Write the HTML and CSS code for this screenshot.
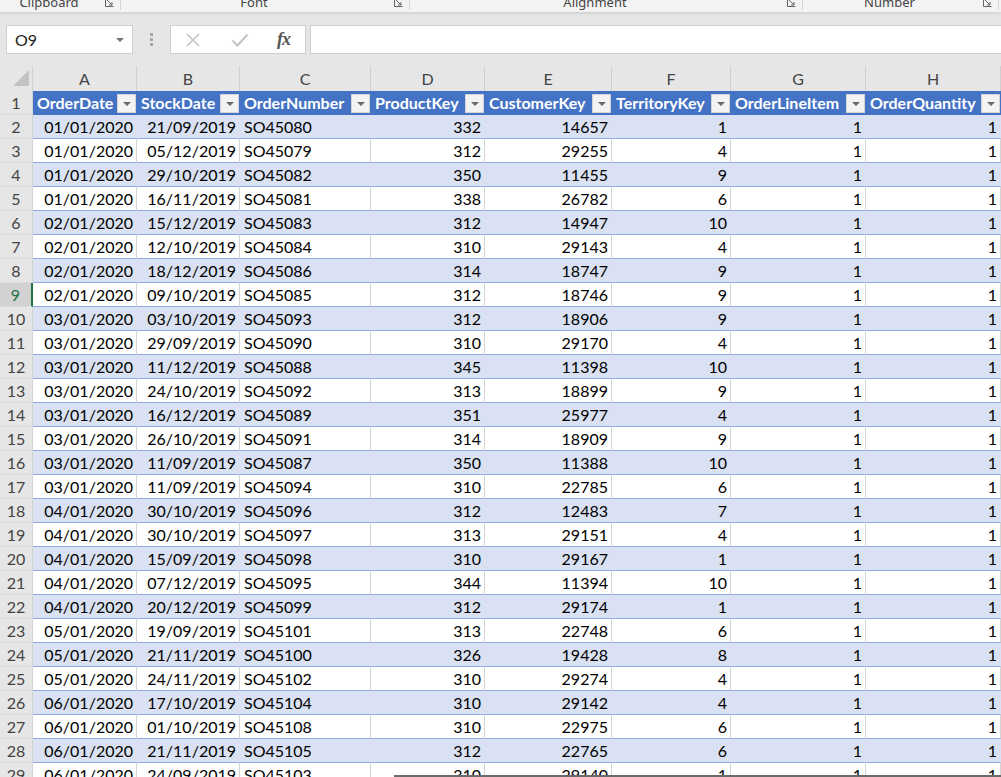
FILE: index.html
```html
<!DOCTYPE html>
<html>
<head>
<meta charset="utf-8">
<link rel="stylesheet" href="styles.css">
</head>
<body>
<div class="ribbon">
  <div class="grp g1"><span class="glabel">Clipboard</span><span class="launch"><svg width="9" height="8" viewBox="0 0 9 8"><path d="M0.5 0.5V7.5H8.5" fill="none" stroke="#666" stroke-width="1"/><path d="M2 1L7 6M7 3V6H4" fill="none" stroke="#666" stroke-width="1"/></svg></span></div>
  <div class="grp g2"><span class="glabel">Font</span><span class="launch"><svg width="9" height="8" viewBox="0 0 9 8"><path d="M0.5 0.5V7.5H8.5" fill="none" stroke="#666" stroke-width="1"/><path d="M2 1L7 6M7 3V6H4" fill="none" stroke="#666" stroke-width="1"/></svg></span></div>
  <div class="grp g3"><span class="glabel">Alignment</span><span class="launch"><svg width="9" height="8" viewBox="0 0 9 8"><path d="M0.5 0.5V7.5H8.5" fill="none" stroke="#666" stroke-width="1"/><path d="M2 1L7 6M7 3V6H4" fill="none" stroke="#666" stroke-width="1"/></svg></span></div>
  <div class="grp g4"><span class="glabel">Number</span><span class="launch"><svg width="9" height="8" viewBox="0 0 9 8"><path d="M0.5 0.5V7.5H8.5" fill="none" stroke="#666" stroke-width="1"/><path d="M2 1L7 6M7 3V6H4" fill="none" stroke="#666" stroke-width="1"/></svg></span></div>
</div>

<div class="fbar">
  <div class="namebox"><span>O9</span><svg class="nbarrow" width="8" height="4" viewBox="0 0 8 4"><path d="M0 0H8L4 4Z" fill="#777"/></svg></div>
  <div class="dots"><i></i><i></i><i></i></div>
  <div class="fxbox">
    <svg class="ic" width="16" height="16" viewBox="0 0 16 16"><path d="M2 2L14 14M14 2L2 14" stroke="#c4c4c4" stroke-width="1.6" fill="none"/></svg>
    <svg class="ic" width="18" height="16" viewBox="0 0 18 16"><path d="M1.5 8.5L6.5 13.5L16.5 2.5" stroke="#c4c4c4" stroke-width="2" fill="none"/></svg>
    <span class="fx">fx</span>
  </div>
  <div class="finput"></div>
</div>

<div class="sheet">
  <div class="row colhead">
    <div class="rh corner"><svg width="16" height="16" viewBox="0 0 16 16"><path d="M16 0V16H0Z" fill="#c3c3c3"/></svg></div>
    <div class="ch ca">A</div><div class="ch cb">B</div><div class="ch cc">C</div><div class="ch cd">D</div><div class="ch ce">E</div><div class="ch cf">F</div><div class="ch cg">G</div><div class="ch chh">H</div>
  </div>
  <div class="row thead">
    <div class="rh">1</div>
    <div class="th ca"><span>OrderDate</span><b class="flt"></b></div>
    <div class="th cb"><span>StockDate</span><b class="flt"></b></div>
    <div class="th cc"><span>OrderNumber</span><b class="flt"></b></div>
    <div class="th cd"><span>ProductKey</span><b class="flt"></b></div>
    <div class="th ce"><span>CustomerKey</span><b class="flt"></b></div>
    <div class="th cf"><span>TerritoryKey</span><b class="flt"></b></div>
    <div class="th cg"><span>OrderLineItem</span><b class="flt"></b></div>
    <div class="th chh"><span>OrderQuantity</span><b class="flt"></b></div>
  </div>
  <div class="row band"><div class="rh">2</div><div class="td ca n">01/01/2020</div><div class="td cb n">21/09/2019</div><div class="td cc">SO45080</div><div class="td cd n">332</div><div class="td ce n">14657</div><div class="td cf n">1</div><div class="td cg n">1</div><div class="td chh n">1</div></div>
  <div class="row"><div class="rh">3</div><div class="td ca n">01/01/2020</div><div class="td cb n">05/12/2019</div><div class="td cc">SO45079</div><div class="td cd n">312</div><div class="td ce n">29255</div><div class="td cf n">4</div><div class="td cg n">1</div><div class="td chh n">1</div></div>
  <div class="row band"><div class="rh">4</div><div class="td ca n">01/01/2020</div><div class="td cb n">29/10/2019</div><div class="td cc">SO45082</div><div class="td cd n">350</div><div class="td ce n">11455</div><div class="td cf n">9</div><div class="td cg n">1</div><div class="td chh n">1</div></div>
  <div class="row"><div class="rh">5</div><div class="td ca n">01/01/2020</div><div class="td cb n">16/11/2019</div><div class="td cc">SO45081</div><div class="td cd n">338</div><div class="td ce n">26782</div><div class="td cf n">6</div><div class="td cg n">1</div><div class="td chh n">1</div></div>
  <div class="row band"><div class="rh">6</div><div class="td ca n">02/01/2020</div><div class="td cb n">15/12/2019</div><div class="td cc">SO45083</div><div class="td cd n">312</div><div class="td ce n">14947</div><div class="td cf n">10</div><div class="td cg n">1</div><div class="td chh n">1</div></div>
  <div class="row"><div class="rh">7</div><div class="td ca n">02/01/2020</div><div class="td cb n">12/10/2019</div><div class="td cc">SO45084</div><div class="td cd n">310</div><div class="td ce n">29143</div><div class="td cf n">4</div><div class="td cg n">1</div><div class="td chh n">1</div></div>
  <div class="row band"><div class="rh">8</div><div class="td ca n">02/01/2020</div><div class="td cb n">18/12/2019</div><div class="td cc">SO45086</div><div class="td cd n">314</div><div class="td ce n">18747</div><div class="td cf n">9</div><div class="td cg n">1</div><div class="td chh n">1</div></div>
  <div class="row"><div class="rh sel">9</div><div class="td ca n">02/01/2020</div><div class="td cb n">09/10/2019</div><div class="td cc">SO45085</div><div class="td cd n">312</div><div class="td ce n">18746</div><div class="td cf n">9</div><div class="td cg n">1</div><div class="td chh n">1</div></div>
  <div class="row band"><div class="rh">10</div><div class="td ca n">03/01/2020</div><div class="td cb n">03/10/2019</div><div class="td cc">SO45093</div><div class="td cd n">312</div><div class="td ce n">18906</div><div class="td cf n">9</div><div class="td cg n">1</div><div class="td chh n">1</div></div>
  <div class="row"><div class="rh">11</div><div class="td ca n">03/01/2020</div><div class="td cb n">29/09/2019</div><div class="td cc">SO45090</div><div class="td cd n">310</div><div class="td ce n">29170</div><div class="td cf n">4</div><div class="td cg n">1</div><div class="td chh n">1</div></div>
  <div class="row band"><div class="rh">12</div><div class="td ca n">03/01/2020</div><div class="td cb n">11/12/2019</div><div class="td cc">SO45088</div><div class="td cd n">345</div><div class="td ce n">11398</div><div class="td cf n">10</div><div class="td cg n">1</div><div class="td chh n">1</div></div>
  <div class="row"><div class="rh">13</div><div class="td ca n">03/01/2020</div><div class="td cb n">24/10/2019</div><div class="td cc">SO45092</div><div class="td cd n">313</div><div class="td ce n">18899</div><div class="td cf n">9</div><div class="td cg n">1</div><div class="td chh n">1</div></div>
  <div class="row band"><div class="rh">14</div><div class="td ca n">03/01/2020</div><div class="td cb n">16/12/2019</div><div class="td cc">SO45089</div><div class="td cd n">351</div><div class="td ce n">25977</div><div class="td cf n">4</div><div class="td cg n">1</div><div class="td chh n">1</div></div>
  <div class="row"><div class="rh">15</div><div class="td ca n">03/01/2020</div><div class="td cb n">26/10/2019</div><div class="td cc">SO45091</div><div class="td cd n">314</div><div class="td ce n">18909</div><div class="td cf n">9</div><div class="td cg n">1</div><div class="td chh n">1</div></div>
  <div class="row band"><div class="rh">16</div><div class="td ca n">03/01/2020</div><div class="td cb n">11/09/2019</div><div class="td cc">SO45087</div><div class="td cd n">350</div><div class="td ce n">11388</div><div class="td cf n">10</div><div class="td cg n">1</div><div class="td chh n">1</div></div>
  <div class="row"><div class="rh">17</div><div class="td ca n">03/01/2020</div><div class="td cb n">11/09/2019</div><div class="td cc">SO45094</div><div class="td cd n">310</div><div class="td ce n">22785</div><div class="td cf n">6</div><div class="td cg n">1</div><div class="td chh n">1</div></div>
  <div class="row band"><div class="rh">18</div><div class="td ca n">04/01/2020</div><div class="td cb n">30/10/2019</div><div class="td cc">SO45096</div><div class="td cd n">312</div><div class="td ce n">12483</div><div class="td cf n">7</div><div class="td cg n">1</div><div class="td chh n">1</div></div>
  <div class="row"><div class="rh">19</div><div class="td ca n">04/01/2020</div><div class="td cb n">30/10/2019</div><div class="td cc">SO45097</div><div class="td cd n">313</div><div class="td ce n">29151</div><div class="td cf n">4</div><div class="td cg n">1</div><div class="td chh n">1</div></div>
  <div class="row band"><div class="rh">20</div><div class="td ca n">04/01/2020</div><div class="td cb n">15/09/2019</div><div class="td cc">SO45098</div><div class="td cd n">310</div><div class="td ce n">29167</div><div class="td cf n">1</div><div class="td cg n">1</div><div class="td chh n">1</div></div>
  <div class="row"><div class="rh">21</div><div class="td ca n">04/01/2020</div><div class="td cb n">07/12/2019</div><div class="td cc">SO45095</div><div class="td cd n">344</div><div class="td ce n">11394</div><div class="td cf n">10</div><div class="td cg n">1</div><div class="td chh n">1</div></div>
  <div class="row band"><div class="rh">22</div><div class="td ca n">04/01/2020</div><div class="td cb n">20/12/2019</div><div class="td cc">SO45099</div><div class="td cd n">312</div><div class="td ce n">29174</div><div class="td cf n">1</div><div class="td cg n">1</div><div class="td chh n">1</div></div>
  <div class="row"><div class="rh">23</div><div class="td ca n">05/01/2020</div><div class="td cb n">19/09/2019</div><div class="td cc">SO45101</div><div class="td cd n">313</div><div class="td ce n">22748</div><div class="td cf n">6</div><div class="td cg n">1</div><div class="td chh n">1</div></div>
  <div class="row band"><div class="rh">24</div><div class="td ca n">05/01/2020</div><div class="td cb n">21/11/2019</div><div class="td cc">SO45100</div><div class="td cd n">326</div><div class="td ce n">19428</div><div class="td cf n">8</div><div class="td cg n">1</div><div class="td chh n">1</div></div>
  <div class="row"><div class="rh">25</div><div class="td ca n">05/01/2020</div><div class="td cb n">24/11/2019</div><div class="td cc">SO45102</div><div class="td cd n">310</div><div class="td ce n">29274</div><div class="td cf n">4</div><div class="td cg n">1</div><div class="td chh n">1</div></div>
  <div class="row band"><div class="rh">26</div><div class="td ca n">06/01/2020</div><div class="td cb n">17/10/2019</div><div class="td cc">SO45104</div><div class="td cd n">310</div><div class="td ce n">29142</div><div class="td cf n">4</div><div class="td cg n">1</div><div class="td chh n">1</div></div>
  <div class="row"><div class="rh">27</div><div class="td ca n">06/01/2020</div><div class="td cb n">01/10/2019</div><div class="td cc">SO45108</div><div class="td cd n">310</div><div class="td ce n">22975</div><div class="td cf n">6</div><div class="td cg n">1</div><div class="td chh n">1</div></div>
  <div class="row band"><div class="rh">28</div><div class="td ca n">06/01/2020</div><div class="td cb n">21/11/2019</div><div class="td cc">SO45105</div><div class="td cd n">312</div><div class="td ce n">22765</div><div class="td cf n">6</div><div class="td cg n">1</div><div class="td chh n">1</div></div>
  <div class="row"><div class="rh">29</div><div class="td ca n">06/01/2020</div><div class="td cb n">24/09/2019</div><div class="td cc">SO45103</div><div class="td cd n">310</div><div class="td ce n">29140</div><div class="td cf n">1</div><div class="td cg n">1</div><div class="td chh n">1</div></div>
  <div class="hscroll"></div>
</div>
</body>
</html>
```

FILE: styles.css
```css
html, body {
  margin: 0;
  padding: 0;
}
body {
  width: 1001px;
  height: 777px;
  overflow: hidden;
  background: #e6e6e6;
  font-family: Lato, "Liberation Sans", sans-serif;
  color: #000;
}

/* ribbon strip */
.ribbon {
  position: relative;
  z-index: 2;
  height: 12px;
  background: #f3f3f3;
  display: flex;
  overflow: hidden;
  box-shadow: 0 1px 3px rgba(0,0,0,0.13);
}
.grp {
  display: flex;
  align-items: flex-start;
  border-right: 1px solid #d6d6d6;
  height: 10px;
}
.g1 { width: 120px; }
.g2 { width: 288px; }
.g3 { width: 392px; }
.g4 { width: 195px; }
.glabel {
  flex: 1;
  text-align: center;
  font-family: "Segoe UI", "Noto Sans", sans-serif;
  font-size: 13px;
  line-height: 13px;
  margin-top: -4px;
  color: #444;
}
.launch {
  width: 22px;
  display: flex;
  justify-content: center;
}
.launch svg { display: block; margin-top: -1px; }

/* formula bar */
.fbar {
  display: flex;
  align-items: center;
  height: 29px;
  padding: 13px 0 12px 6px;
}
.namebox {
  width: 127px;
  height: 29px;
  box-sizing: border-box;
  background: #fff;
  border: 1px solid #cfcfcf;
  display: flex;
  align-items: center;
  padding-left: 8px;
  padding-right: 8px;
  font-size: 16px;
  color: #222;
}
.namebox span { flex: 1; }
.nbarrow { display: block; }
.dots {
  width: 37px;
  display: flex;
  flex-direction: column;
  align-items: center;
  gap: 2px;
}
.dots i {
  display: block;
  width: 3px;
  height: 3px;
  background: #a8a8a8;
}
.fxbox {
  width: 136px;
  height: 29px;
  box-sizing: border-box;
  background: #fff;
  border: 1px solid #cfcfcf;
  display: flex;
  align-items: center;
  padding-left: 14px;
}
.fxbox .ic { display: block; }
.fxbox .ic:nth-child(1) { margin-right: 30px; }
.fxbox .ic:nth-child(2) { margin-right: 28px; }
.fx {
  font-family: "Liberation Serif", "DejaVu Serif", serif;
  font-style: italic;
  font-weight: bold;
  font-size: 18px;
  color: #555;
  letter-spacing: -1px;
}
.finput {
  flex: 1;
  height: 29px;
  box-sizing: border-box;
  margin-left: 4px;
  background: #fff;
  border: 1px solid #cfcfcf;
  border-right: none;
}

/* sheet */
.sheet {
  position: relative;
}
.row {
  display: flex;
  height: 24px;
}
.rh {
  width: 33px;
  flex: none;
  box-sizing: border-box;
  background: #e6e6e6;
  color: #444;
  font-size: 16px;
  text-align: center;
  line-height: 23px;
  border-bottom: 1px solid #dcdcdc;
  border-right: 1px solid #d2d2d2;
}
.rh.sel {
  background: #d2d2d2;
  color: #217346;
  border-right: 2px solid #217346;
}
.ca { width: 104px; }
.cb { width: 103px; }
.cc { width: 131px; }
.cd { width: 114px; }
.ce { width: 127px; }
.cf { width: 119px; }
.cg { width: 135px; }
.chh { width: 135px; }

.colhead { height: 25px; }
.colhead .rh {
  border-bottom: none;
  display: flex;
  align-items: flex-end;
  justify-content: flex-end;
  padding: 0 3px 5px 0;
}
.corner svg { display: block; }
.ch {
  flex: none;
  box-sizing: border-box;
  text-align: center;
  font-size: 16px;
  color: #444;
  line-height: 25px;
  border-right: 1px solid #cfcfcf;
  background: #e6e6e6;
}

.thead .th {
  flex: none;
  box-sizing: border-box;
  background: #4472c4;
  color: #fff;
  font-weight: bold;
  font-size: 16px;
  display: flex;
  align-items: center;
  padding-left: 4px;
  overflow: hidden;
  white-space: nowrap;
}
.thead .th span {
  flex: 1;
  overflow: hidden;
  line-height: 24px;
}
.flt {
  flex: none;
  width: 19px;
  height: 19px;
  box-sizing: border-box;
  margin-right: 1px;
  background: #f3f3f3;
  border: 1px solid #d4d4d4;
  position: relative;
}
.flt::after {
  content: "";
  position: absolute;
  left: 5px;
  top: 7px;
  border-left: 4px solid transparent;
  border-right: 4px solid transparent;
  border-top: 4px solid #6a6a6a;
}

.td {
  flex: none;
  box-sizing: border-box;
  font-size: 16px;
  line-height: 23px;
  background: #fff;
  border-bottom: 1px solid #8ea9db;
  border-right: 1px solid #d4d4d4;
  padding: 0 4px;
  white-space: nowrap;
  overflow: hidden;
}
.td.n { text-align: right; padding-right: 3px; }
.band .td {
  background: #d9e1f2;
  border-right-color: #d9e1f2;
}

.hscroll {
  position: absolute;
  left: 394px;
  right: 0;
  top: 709px;
  height: 2px;
  background: #6b6b6b;
}
```
